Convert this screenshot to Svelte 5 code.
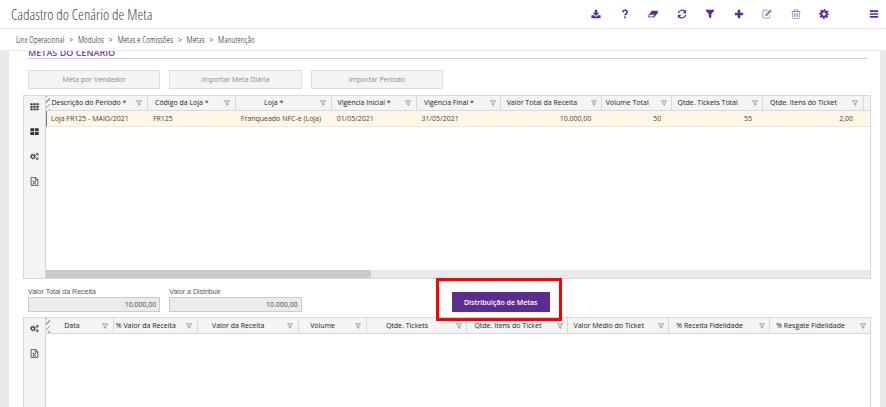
<script lang="ts">
  type Column = { label: string; width: number; value?: string; numeric?: boolean };

  const crumbs = ['Linx Operacional', 'Módulos', 'Metas e Comissões', 'Metas', 'Manutenção'];

  const actions = [
    { icon: 'download', label: 'Salvar' },
    { icon: 'help', label: 'Ajuda' },
    { icon: 'eraser', label: 'Limpar' },
    { icon: 'refresh', label: 'Atualizar' },
    { icon: 'filter', label: 'Filtrar' },
    { icon: 'plus', label: 'Novo' },
    { icon: 'edit', label: 'Editar', disabled: true },
    { icon: 'trash', label: 'Excluir', disabled: true },
    { icon: 'cog', label: 'Configurações' }
  ];

  const shortcuts = ['Meta por Vendedor', 'Importar Meta Diária', 'Importar Período'];

  const periods: Column[] = [
    { label: 'Descrição do Período *', width: 102, value: 'Loja FR125 - MAIO/2021' },
    { label: 'Código da Loja *', width: 88, value: 'FR125' },
    { label: 'Loja *', width: 96, value: 'Franqueado NFC-e (Loja)' },
    { label: 'Vigência Inicial *', width: 85, value: '01/05/2021' },
    { label: 'Vigência Final *', width: 85, value: '31/05/2021' },
    { label: 'Valor Total da Receita', width: 101, value: '10.000,00', numeric: true },
    { label: 'Volume Total', width: 70, value: '50', numeric: true },
    { label: 'Qtde. Tickets Total', width: 91, value: '55', numeric: true },
    { label: 'Qtde. Itens do Ticket', width: 101, value: '2,00', numeric: true },
    { label: '', width: 6 }
  ];

  const days: Column[] = [
    { label: 'Data', width: 68 },
    { label: '% Valor da Receita', width: 84 },
    { label: 'Valor da Receita', width: 101 },
    { label: 'Volume', width: 68 },
    { label: 'Qtde. Tickets', width: 101 },
    { label: 'Qtde. Itens do Ticket', width: 101 },
    { label: 'Valor Médio do Ticket', width: 101 },
    { label: '% Receita Fidelidade', width: 101 },
    { label: '% Resgate Fidelidade', width: 100 }
  ];

  let total = $state('10.000,00');
  let remaining = $state('10.000,00');

  function share(columns: Column[], width: number) {
    return (width / columns.reduce((sum, c) => sum + c.width, 0)) * 100;
  }
</script>

{#snippet icon(name: string)}
  <svg class="icon" viewBox="0 0 24 24" fill="currentColor" aria-hidden="true">
    {#if name === 'download'}
      <path d="M9 2h6v7h5l-8 8-8-8h5z" />
      <path d="M1 15h6l3 3h4l3-3h6v7H1z" />
    {:else if name === 'help'}
      <path d="M7 8c0-3 2-5 5-5s5 2 5 5c0 4-5 4-5 7" fill="none" stroke="currentColor" stroke-width="4" />
      <path d="M10 18h4v4h-4z" />
    {:else if name === 'eraser'}
      <path d="M9 4h15l-6 9H3z" />
      <path d="M4 12h13l-4 7H0z" fill="none" stroke="currentColor" stroke-width="2" />
      <path d="M24 4v5l-9 11h-3z" />
    {:else if name === 'refresh'}
      <path d="M3 10a9.500 9.500 0 0 1 16-4.500M21 14a9.500 9.500 0 0 1-16 4.500" fill="none" stroke="currentColor" stroke-width="3" />
      <path d="M22 1v9h-9zM2 23v-9h9z" />
    {:else if name === 'filter'}
      <path d="M2 2h20v2l-7 8v11l-6-4v-7L2 4z" />
    {:else if name === 'plus'}
      <path d="M9 2h6v7h7v6h-7v7H9v-7H2V9h7z" />
    {:else if name === 'edit'}
      <path d="M16 3H4a2 2 0 0 0-2 2v15a2 2 0 0 0 2 2h13a2 2 0 0 0 2-2v-5" fill="none" stroke="currentColor" stroke-width="2" />
      <path d="M20 1l4 4-12 12H8v-4z" />
    {:else if name === 'trash'}
      <path d="M4 6h16v15a2 2 0 0 1-2 2H6a2 2 0 0 1-2-2zM1 6h22M8 6V2h8v4M8.500 10v9M12 10v9M15.500 10v9" fill="none" stroke="currentColor" stroke-width="2" />
    {:else if name === 'cog'}
      <g fill="none" stroke="currentColor">
        <circle cx="12" cy="12" r="6.500" stroke-width="5" />
        <circle cx="12" cy="12" r="10" stroke-width="4" stroke-dasharray="3.930" stroke-dashoffset="1.960" />
      </g>
    {:else if name === 'menu'}
      <path d="M2 3h20v4H2zM2 10h20v4H2zM2 17h20v4H2z" />
    {:else if name === 'grid'}
      <path d="M1 3h6v5H1zM9 3h6v5H9zM17 3h6v5h-6zM1 10h6v5H1zM9 10h6v5H9zM17 10h6v5h-6zM1 17h6v5H1zM9 17h6v5H9zM17 17h6v5h-6z" />
    {:else if name === 'blocks'}
      <path d="M1 3h10v8H1zM13 3h10v8H13zM1 13h10v8H1zM13 13h10v8H13z" />
    {:else if name === 'cogs'}
      <g fill="none" stroke="currentColor">
        <circle cx="8" cy="12" r="4.500" stroke-width="3" />
        <circle cx="8" cy="12" r="7" stroke-width="2" stroke-dasharray="2.750" />
        <circle cx="19.500" cy="6" r="2.500" stroke-width="2.500" />
        <circle cx="19.500" cy="18" r="2.500" stroke-width="2.500" />
      </g>
    {:else if name === 'excel'}
      <path d="M3 1h12l6 6v16H3zM14 1v7h7M8 11l7 8M15 11l-7 8M7 19h3M13 19h3M7 11h3M13 11h3" fill="none" stroke="currentColor" stroke-width="2" />
    {:else if name === 'funnel'}
      <path d="M2 3h20l-7 9v9l-6-3v-6z" fill="none" stroke="currentColor" stroke-width="3" />
    {/if}
  </svg>
{/snippet}

{#snippet head(columns: Column[])}
  <colgroup>
    {#each columns as column}
      <col style="width: {share(columns, column.width)}%" />
    {/each}
  </colgroup>
  <thead>
    <tr>
      {#each columns as column}
        <th>
          {#if column.label}
            <div class="th">
              <span>{column.label}</span>
              <button type="button" class="th-filter" aria-label="Filtrar {column.label}">{@render icon('funnel')}</button>
            </div>
          {/if}
        </th>
      {/each}
    </tr>
  </thead>
{/snippet}

{#snippet tools(names: string[])}
  <div class="tools">
    {#each names as name}
      <button type="button" aria-label={name}>{@render icon(name)}</button>
    {/each}
  </div>
{/snippet}

<div class="page">
  <header class="topbar">
    <h1>Cadastro do Cenário de Meta</h1>
    <div class="actions">
      {#each actions as action}
        <button type="button" aria-label={action.label} disabled={action.disabled}>{@render icon(action.icon)}</button>
      {/each}
    </div>
    <button type="button" class="menu" aria-label="Menu">{@render icon('menu')}</button>
  </header>

  <nav class="crumbs">
    {#each crumbs as crumb, i}
      {#if i > 0}<span>&gt;</span>{/if}
      <a href="#{i}">{crumb}</a>
    {/each}
  </nav>

  <main>
    <section class="panel">
      <h2>METAS DO CENÁRIO</h2>

      <div class="row shortcuts">
        {#each shortcuts as shortcut}
          <button type="button" disabled>{shortcut}</button>
        {/each}
      </div>

      <div class="grid periods">
        {@render tools(['grid', 'blocks', 'cogs', 'excel'])}
        <div class="sheet">
          <table>
            {@render head(periods)}
            <tbody>
              <tr>
                {#each periods as column}
                  <td class:numeric={column.numeric}>{column.value ?? ''}</td>
                {/each}
              </tr>
            </tbody>
          </table>
          <div class="scroll"><div class="thumb"></div></div>
        </div>
      </div>

      <div class="row totals">
        <div class="field">
          <label for="total">Valor Total da Receita</label>
          <input id="total" type="text" readonly bind:value={total} />
        </div>
        <div class="field">
          <label for="remaining">Valor a Distribuir</label>
          <input id="remaining" type="text" readonly bind:value={remaining} />
        </div>
        <div class="highlight">
          <button type="button" class="primary">Distribuição de Metas</button>
        </div>
      </div>

      <div class="grid days">
        {@render tools(['cogs', 'excel'])}
        <div class="sheet">
          <table>
            {@render head(days)}
          </table>
        </div>
      </div>
    </section>
  </main>
</div>

<style>
  :global(body) {
    margin: 0;
    background: #fff;
  }

  .page {
    display: flex;
    flex-direction: column;
    height: 100vh;
    overflow: hidden;
    font-family: 'Open Sans', 'Noto Sans', sans-serif;
    font-size: 7px;
    color: #444;
  }

  .page *,
  .page *::after {
    box-sizing: border-box;
  }

  button {
    margin: 0;
    padding: 0;
    border: 0;
    background: none;
    font: inherit;
    color: inherit;
  }

  .icon {
    display: block;
    width: 10px;
    height: 10px;
  }

  .topbar {
    display: flex;
    align-items: center;
    flex-shrink: 0;
    height: 29px;
    padding: 0 7px 0 11px;
    border-bottom: 1px solid #e6e6e6;
    color: #5c2d91;
  }

  h1 {
    flex: 1;
    margin: 0;
    font-family: 'Open Sans Condensed Light', 'Liberation Sans Narrow', Roboto, sans-serif;
    font-size: 15px;
    font-weight: 300;
    line-height: 20px;
    color: #444;
  }

  .actions {
    display: flex;
    justify-content: space-between;
    width: 238px;
    margin-right: 40px;
  }

  .actions button:disabled {
    opacity: 0.6;
  }

  .crumbs {
    display: flex;
    align-items: center;
    gap: 5px;
    flex-shrink: 0;
    height: 22px;
    padding: 0 16px;
    border-bottom: 1px solid #ececec;
    font-family: 'Open Sans Condensed Light', 'Liberation Sans Narrow', Roboto, sans-serif;
    font-size: 9px;
    color: #222;
  }

  .crumbs a {
    color: inherit;
    text-decoration: none;
  }

  main {
    display: flex;
    flex: 1;
    min-height: 0;
    overflow: hidden;
    padding: 0 6px 0 9px;
    background: #e9e9e9;
  }

  /* scrolled a little, so the heading slips under the breadcrumb */
  .panel {
    display: flex;
    flex-direction: column;
    flex: 1;
    min-width: 0;
    margin-top: -8px;
    padding: 0 9px 0 14px;
    background: #fff;
  }

  h2 {
    flex-shrink: 0;
    height: 16px;
    margin: 0 4px 0 5px;
    border-bottom: 1px solid #d5c5e8;
    font-size: 9px;
    font-weight: 600;
    line-height: 20px;
    color: #6f42a8;
  }

  .row {
    display: grid;
    grid-template-columns: repeat(6, 1fr);
    column-gap: 9px;
    flex-shrink: 0;
    margin: 0 4px 0 5px;
  }

  .shortcuts {
    padding: 11px 0 6px;
  }

  .shortcuts button {
    height: 19px;
    border: 1px solid #ddd;
    background: #f4f4f4;
    color: #8c8c8c;
  }

  .grid {
    display: flex;
    border: 1px solid #d8d8d8;
  }

  .periods {
    flex: 0 0 184px;
  }

  .days {
    flex: 1;
    border-bottom: 0;
  }

  .tools {
    display: flex;
    flex-direction: column;
    align-items: center;
    gap: 16px;
    width: 22px;
    padding-top: 6px;
    border-right: 1px solid #d8d8d8;
    background: #f4f4f4;
    color: #333;
  }

  .tools .icon {
    width: 9px;
    height: 9px;
  }

  .sheet {
    display: flex;
    flex-direction: column;
    justify-content: space-between;
    flex: 1;
    min-width: 0;
  }

  table {
    width: 100%;
    table-layout: fixed;
    border-collapse: separate;
    border-spacing: 0;
  }

  th,
  td {
    height: 15px;
    padding: 0;
    white-space: nowrap;
    line-height: 14px;
  }

  th {
    border-right: 1px solid #d8d8d8;
    border-bottom: 1px solid #d8d8d8;
    background: #f4f4f4;
    font-weight: 400;
    color: #222;
  }

  th:first-child {
    background: repeating-linear-gradient(135deg, #999 0 1px, #f4f4f4 1px 4px) 0 0 / 4px 100% no-repeat #f4f4f4;
  }

  th:last-child {
    border-right: 0;
  }

  .th {
    display: flex;
    align-items: center;
  }

  .th span {
    flex: 1;
    padding-right: 4px;
    text-align: center;
  }

  th:first-child span {
    padding: 0;
  }

  .th-filter {
    display: flex;
    justify-content: center;
    width: 15px;
    color: #888;
  }

  .th-filter .icon {
    width: 6px;
    height: 6px;
  }

  td {
    padding: 0 5px;
    border-bottom: 1px solid #f0e8d8;
    background: #fff6e5;
    line-height: 15px;
  }

  td:first-child {
    border-left: 1px solid #777;
    padding-left: 4px;
  }

  td.numeric {
    padding-right: 11px;
    text-align: right;
  }

  .days th {
    height: 16px;
  }

  .scroll {
    height: 8px;
    background: #e9e9e9;
  }

  .thumb {
    width: 39.5%;
    height: 100%;
    background: #cacaca;
  }

  .totals {
    padding: 8px 0 5px;
  }

  .field {
    display: flex;
    flex-direction: column;
  }

  .field label {
    line-height: 10px;
    font-family: 'Liberation Sans', sans-serif;
    color: #555;
  }

  .field input {
    width: 100%;
    height: 15px;
    margin: 0;
    padding: 0 3px;
    border: 1px solid #ccc;
    border-radius: 0;
    outline: none;
    background: #ececec;
    font: inherit;
    text-align: right;
    color: #444;
  }

  .highlight {
    position: relative;
    grid-column: 4;
    justify-self: start;
    align-self: end;
  }

  .highlight::after {
    content: '';
    position: absolute;
    inset: -14px -12px -9px -16px;
    border: 3px solid #f00;
    pointer-events: none;
  }

  .primary {
    display: block;
    height: 20px;
    padding: 0 12px;
    background: #5c2d91;
    font-weight: 600;
    color: #fff;
  }
</style>
